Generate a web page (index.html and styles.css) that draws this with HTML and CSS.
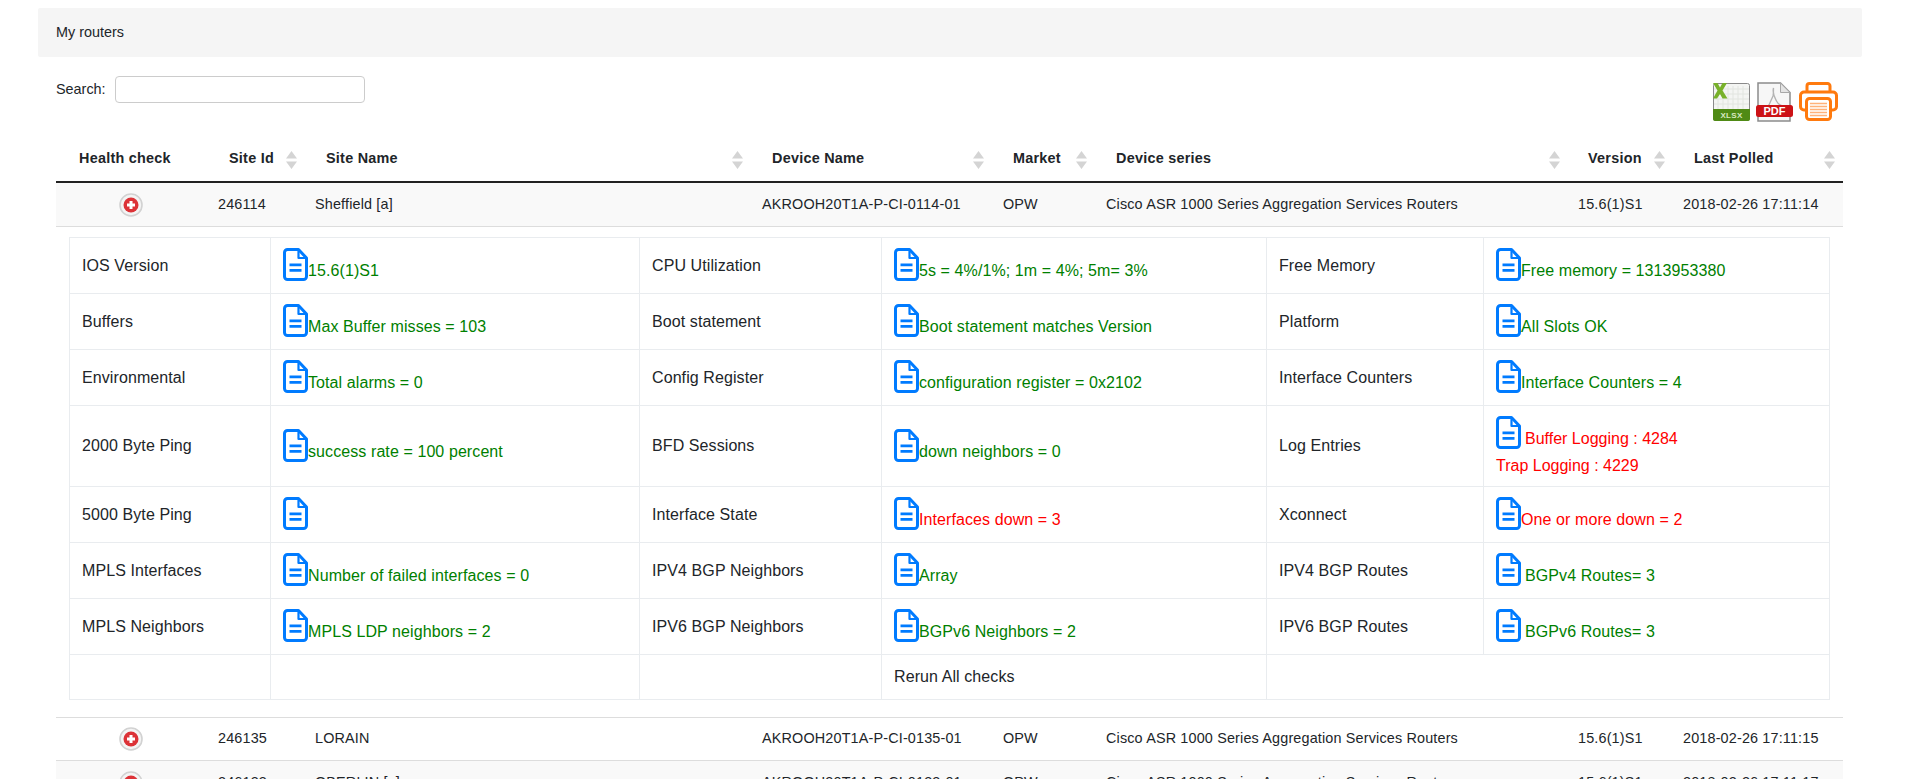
FILE: index.html
```html
<!DOCTYPE html>
<html lang="en">
<head>
<meta charset="utf-8">
<title>My routers</title>
<link rel="stylesheet" href="styles.css">
</head>
<body>
<svg class="defs" width="0" height="0" aria-hidden="true">
  <symbol id="doc" viewBox="0 0 25 33">
    <path d="M4.500 1.500h11L23.500 10v18.500a3 3 0 0 1-3 3h-16a3 3 0 0 1-3-3v-24a3 3 0 0 1 3-3z" fill="#fff" stroke="#007bff" stroke-width="3" stroke-linejoin="round"/>
    <path d="M15.500 2v8h8" fill="none" stroke="#007bff" stroke-width="2.200" stroke-linejoin="round"/>
    <path d="M6.500 15.500h12v2.800h-12zM6.500 21h12v2.800h-12z" fill="#007bff"/>
  </symbol>
  <symbol id="plus" viewBox="0 0 24 24">
    <circle cx="12" cy="12" r="11" fill="#f4f4f4" stroke="#d2d2d2" stroke-width="1.600"/>
    <circle cx="12" cy="12" r="7.500" fill="#dc3237"/>
    <path d="M10.500 8h3v2.500H16v3h-2.500V16h-3v-2.500H8v-3h2.500z" fill="#fff"/>
  </symbol>
  <symbol id="sort" viewBox="0 0 11 18">
    <path d="M5.500 0L11 7.500H0zM0 10.500h11L5.500 18z" fill="#d4d4d4"/>
  </symbol>
</svg>
<div class="page">
  <div class="panel">My routers</div>
  <div class="toolbar">
    <label class="search">Search: <input type="text" class="search-input"></label>
    <div class="exports">
      <svg class="ico-x" viewBox="0 0 37 38">
        <rect x=".5" y=".5" width="36" height="37" rx="2" fill="#f4f5f3" stroke="#8a8a8a"/>
        <path d="M5 3v24M10 3v24M15 3v24M20 3v24M25 3v24M30 3v24M1 6h35M1 11h35M1 16h35M1 21h35" stroke="#e2e5e0" stroke-width="1"/>
        <path d="M0 26h37v10a2 2 0 0 1-2 2H2a2 2 0 0 1-2-2z" fill="#4f8a15"/>
        <path d="M0 0h4.500l2.500 4.500L9.500 0H14L9.500 7.500 14.500 15.500H9.500L7 11 4 15.500H0L4.500 7.500z" fill="#78b12a"/>
        <text x="18.500" y="35" class="ico-label ico-label-x">XLSX</text>
      </svg>
      <svg class="ico-p" viewBox="0 0 37 40">
        <path d="M2 1h22.500L34 10.500V39H2z" fill="#f7f7f7" stroke="#8c8c8c" stroke-width="1.500"/>
        <path d="M24.500 1v9.500H34z" fill="#e4e4e4" stroke="#a8a8a8"/>
        <path d="M17.500 6c-1.500 5 1.500 10 3 13s5 5 8 5c-5-1-11 0-15 2-2 1-4 3-5 4 3-4 7-12 8.500-16 .6-2.500.5-6 .5-8z" fill="none" stroke="#b3b3b3" stroke-width="1.300"/>
        <rect x="0" y="23" width="37" height="12" rx="2.500" fill="#cc1216"/>
        <text x="18.500" y="33.200" class="ico-label ico-label-p">PDF</text>
      </svg>
      <svg class="ico-r" viewBox="0 0 39 39" fill="none" stroke="#ff7a0e" stroke-width="3">
        <path d="M8 10V4a2.500 2.500 0 0 1 2.500-2.500h18A2.500 2.500 0 0 1 31 4v6"/>
        <path d="M7 28H5a3.500 3.500 0 0 1-3.500-3.500V13.500A3.500 3.500 0 0 1 5 10h29a3.500 3.500 0 0 1 3.500 3.500v11A3.500 3.500 0 0 1 34 28h-2"/>
        <rect x="7.500" y="16.500" width="24" height="21" rx="3" fill="#fff"/>
        <path d="M11 21.500h17M11 24.500h17M11 27.500h17M11 30.500h17M11 33.500h17" stroke="#ffb27a" stroke-width="1.500"/>
      </svg>
    </div>
  </div>
  <table class="routers">
    <colgroup>
      <col class="c1"><col class="c2"><col class="c3"><col class="c4"><col class="c5"><col class="c6"><col class="c7"><col class="c8">
    </colgroup>
    <thead>
      <tr>
        <th class="th-first">Health check</th>
        <th>Site Id<svg class="sort"><use href="#sort"/></svg></th>
        <th>Site Name<svg class="sort"><use href="#sort"/></svg></th>
        <th>Device Name<svg class="sort"><use href="#sort"/></svg></th>
        <th>Market<svg class="sort"><use href="#sort"/></svg></th>
        <th>Device series<svg class="sort"><use href="#sort"/></svg></th>
        <th class="th-version">Version<svg class="sort"><use href="#sort"/></svg></th>
        <th>Last Polled<svg class="sort"><use href="#sort"/></svg></th>
      </tr>
    </thead>
    <tbody>
      <tr class="row odd">
        <td class="ctl"><svg class="plus"><use href="#plus"/></svg></td>
        <td>246114</td><td>Sheffield [a]</td><td class="shift">AKROOH20T1A-P-CI-0114-01</td><td class="shift">OPW</td>
        <td class="shift">Cisco ASR 1000 Series Aggregation Services Routers</td><td>15.6(1)S1</td><td>2018-02-26 17:11:14</td>
      </tr>
      <tr class="detail-row">
        <td colspan="8" class="detail">
          <table class="checks">
            <colgroup><col class="k1"><col class="k2"><col class="k3"><col class="k4"><col class="k5"><col class="k6"></colgroup>
            <tbody>
              <tr>
                <td>IOS Version</td><td class="v ok"><svg class="doc"><use href="#doc"/></svg>15.6(1)S1</td>
                <td>CPU Utilization</td><td class="v ok"><svg class="doc"><use href="#doc"/></svg>5s = 4%/1%; 1m = 4%; 5m= 3%</td>
                <td>Free Memory</td><td class="v ok"><svg class="doc"><use href="#doc"/></svg>Free memory = 1313953380</td>
              </tr>
              <tr>
                <td>Buffers</td><td class="v ok"><svg class="doc"><use href="#doc"/></svg>Max Buffer misses = 103</td>
                <td>Boot statement</td><td class="v ok"><svg class="doc"><use href="#doc"/></svg>Boot statement matches Version</td>
                <td>Platform</td><td class="v ok"><svg class="doc"><use href="#doc"/></svg>All Slots OK</td>
              </tr>
              <tr>
                <td>Environmental</td><td class="v ok"><svg class="doc"><use href="#doc"/></svg>Total alarms = 0</td>
                <td>Config Register</td><td class="v ok"><svg class="doc"><use href="#doc"/></svg>configuration register = 0x2102</td>
                <td>Interface Counters</td><td class="v ok"><svg class="doc"><use href="#doc"/></svg>Interface Counters = 4</td>
              </tr>
              <tr>
                <td>2000 Byte Ping</td><td class="v ok"><svg class="doc"><use href="#doc"/></svg>success rate = 100 percent</td>
                <td>BFD Sessions</td><td class="v ok"><svg class="doc"><use href="#doc"/></svg>down neighbors = 0</td>
                <td>Log Entries</td><td class="v bad log"><svg class="doc"><use href="#doc"/></svg><span class="gap">Buffer Logging : 4284</span><br>Trap Logging : 4229</td>
              </tr>
              <tr>
                <td>5000 Byte Ping</td><td class="v ok"><svg class="doc"><use href="#doc"/></svg></td>
                <td>Interface State</td><td class="v bad"><svg class="doc"><use href="#doc"/></svg>Interfaces down = 3</td>
                <td>Xconnect</td><td class="v bad"><svg class="doc"><use href="#doc"/></svg>One or more down = 2</td>
              </tr>
              <tr>
                <td>MPLS Interfaces</td><td class="v ok"><svg class="doc"><use href="#doc"/></svg>Number of failed interfaces = 0</td>
                <td>IPV4 BGP Neighbors</td><td class="v ok"><svg class="doc"><use href="#doc"/></svg>Array</td>
                <td>IPV4 BGP Routes</td><td class="v ok"><svg class="doc"><use href="#doc"/></svg><span class="gap">BGPv4 Routes= 3</span></td>
              </tr>
              <tr>
                <td>MPLS Neighbors</td><td class="v ok"><svg class="doc"><use href="#doc"/></svg>MPLS LDP neighbors = 2</td>
                <td>IPV6 BGP Neighbors</td><td class="v ok"><svg class="doc"><use href="#doc"/></svg>BGPv6 Neighbors = 2</td>
                <td>IPV6 BGP Routes</td><td class="v ok"><svg class="doc"><use href="#doc"/></svg><span class="gap">BGPv6 Routes= 3</span></td>
              </tr>
              <tr>
                <td></td><td></td><td></td><td>Rerun All checks</td><td colspan="2"></td>
              </tr>
            </tbody>
          </table>
        </td>
      </tr>
      <tr class="row row-top">
        <td class="ctl"><svg class="plus"><use href="#plus"/></svg></td>
        <td>246135</td><td>LORAIN</td><td class="shift">AKROOH20T1A-P-CI-0135-01</td><td class="shift">OPW</td>
        <td class="shift">Cisco ASR 1000 Series Aggregation Services Routers</td><td>15.6(1)S1</td><td>2018-02-26 17:11:15</td>
      </tr>
      <tr class="row odd">
        <td class="ctl"><svg class="plus"><use href="#plus"/></svg></td>
        <td>246133</td><td>OBERLIN [a]</td><td class="shift">AKROOH20T1A-P-CI-0133-01</td><td class="shift">OPW</td>
        <td class="shift">Cisco ASR 1000 Series Aggregation Services Routers</td><td>15.6(1)S1</td><td>2018-02-26 17:11:17</td>
      </tr>
    </tbody>
  </table>
</div>
</body>
</html>
```
FILE: styles.css
```css
* { box-sizing: border-box; }
html, body { margin: 0; height: 779px; overflow: hidden; background: #fff; }
body { font-family: "Liberation Sans", Arial, sans-serif; font-size: 14.4px; line-height: 1.5; color: #212529; }
.defs { position: absolute; }
.page { padding: 8px 58px 0 38px; width: 1920px; }
.panel { height: 49px; padding: 14px 18px; background: #f5f5f5; border-radius: 2px; line-height: 21px; width: 1824px; }
.toolbar { display: flex; justify-content: space-between; align-items: flex-start; padding: 19px 6px 0 18px; height: 79px; width: 1806px; }
.search { display: flex; align-items: center; gap: 9px; height: 27px; }
.search-input { width: 250px; height: 27px; border: 1px solid #ccc; border-radius: 4px; background: #fff; }
.exports { display: flex; align-items: flex-start; gap: 6px; margin-top: 6px; }
.ico-x { width: 37px; height: 38px; margin-top: 1px; display: block; }
.ico-p { width: 37px; height: 40px; display: block; }
.ico-r { width: 39px; height: 39px; display: block; }
.ico-label { font-family: "Liberation Sans", Arial, sans-serif; font-weight: 700; text-anchor: middle; fill: #fff; }
.ico-label-x { font-size: 8px; fill: #d7e8c1; letter-spacing: .3px; }
.ico-label-p { font-size: 11px; }
.routers { border-collapse: separate; border-spacing: 0; table-layout: fixed; width: 1787px; margin-left: 18px; }
.c1 { width: 152px; } .c2 { width: 97px; } .c3 { width: 446px; } .c4 { width: 241px; }
.c5 { width: 103px; } .c6 { width: 473px; } .c7 { width: 105px; } .c8 { width: 170px; }
.routers > thead th { position: relative; height: 47px; padding: 1px 0 0 21px; font-weight: 700; letter-spacing: .25px; text-align: left; white-space: nowrap; border-bottom: 2px solid #222; }
.routers > thead th.th-first { padding-left: 23px; }
.routers > thead th.th-version { padding-left: 20px; }
.sort { position: absolute; right: 8px; top: 15px; width: 11px; height: 18px; }
.row td { height: 44px; padding: 0 10px; border-bottom: 1px solid #ddd; white-space: nowrap; letter-spacing: .16px; }
.row td.shift { padding-left: 11px; }
.row.odd td { background: #f9f9f9; }
.row-top td { border-top: 1px solid #ddd; }
.row .ctl { padding: 0 2px 0 0; }
.plus { width: 24px; height: 24px; display: block; margin: 0 auto; }
.detail { padding: 10px 11px 17px 13px; }
.checks { border-collapse: collapse; table-layout: fixed; width: 1760px; font-size: 16px; letter-spacing: .09px; }
.k1 { width: 201px; } .k2 { width: 369px; } .k3 { width: 242px; } .k4 { width: 385px; } .k5 { width: 217px; } .k6 { width: 346px; }
.checks td { border: 1px solid #e9ecef; padding: 6px 12px; height: 56px; vertical-align: middle; line-height: 24px; }
.checks td.v { padding: 10px 12px; }
.checks td.log { padding: 10px 12px 7px; line-height: 27px; letter-spacing: 0; }
.checks tr:last-child td { height: 45px; }
.v.ok { color: #008000; }
.v.bad { color: #f00; }
.doc { width: 25px; height: 33px; display: inline-block; vertical-align: -5px; }
.gap { margin-left: 4px; }
```
